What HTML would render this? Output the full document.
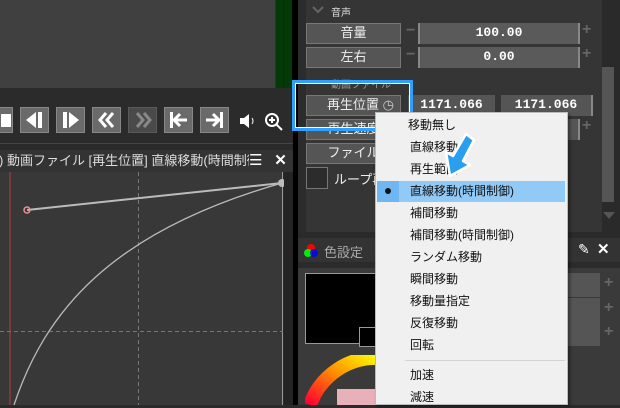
<!DOCTYPE html><html><head><meta charset="utf-8"><style>
*{margin:0;padding:0;box-sizing:border-box}
body{width:620px;height:405px;overflow:hidden;background:#2a2a2a;font-family:"Liberation Sans","Noto Sans CJK JP",sans-serif;position:relative}
.a{position:absolute}
.btn{position:absolute;background:#555;border:1px solid #777;color:#eee;font-size:13px;text-align:center;line-height:18px}
.fld{position:absolute;background:#5a5a5a;border-left:2px solid #888;border-right:2px solid #888;color:#fff;font-family:"Liberation Mono","DejaVu Sans Mono",monospace;font-size:13px;font-weight:bold;text-align:center;line-height:20px}
.tb{position:absolute;top:107px;width:29px;height:26px;background:#6a6a6a;border:1px solid #888}
.mi{position:absolute;left:410px;font-size:12px;color:#111;line-height:22px}
.pm{position:absolute;color:#666;font-size:16px;font-weight:bold}
</style></head><body>
<div class="a" style="left:0;top:0;width:275px;height:88px;background:#404040"></div>
<div class="a" style="left:275px;top:0;width:17px;height:88px;background:#033a08;border-left:1px solid #0a4a10"></div>
<div class="a" style="left:283px;top:0;width:1px;height:88px;background:#0c2a0c"></div>
<div class="a" style="left:292px;top:0;width:6px;height:90px;background:#000"></div>
<!-- toolbar -->
<div class="a" style="left:0;top:88px;width:293px;height:56px;background:#2b2b2b;border-bottom:1px solid #444"></div>
<div class="tb" style="left:-16px"><div class="a" style="left:16px;top:6px;width:10px;height:13px;background:#fff"></div></div>
<div class="tb" style="left:20px"><svg class="a" width="27" height="24"><polygon points="5,12 15,4 15,20" fill="#fff"/><rect x="17" y="4" width="4" height="16" fill="#fff"/></svg></div>
<div class="tb" style="left:56px"><svg class="a" width="27" height="24"><rect x="6" y="4" width="4" height="16" fill="#fff"/><polygon points="12,4 22,12 12,20" fill="#fff"/></svg></div>
<div class="tb" style="left:92px"><svg class="a" width="27" height="24"><path d="M13 5 L7 12 L13 19 M20 5 L14 12 L20 19" stroke="#fff" stroke-width="3" fill="none"/></svg></div>
<div class="tb" style="left:128px;background:#4a4a4a;border-color:#5a5a5a"><svg class="a" width="27" height="24"><path d="M8 5 L14 12 L8 19 M15 5 L21 12 L15 19" stroke="#888" stroke-width="3" fill="none"/></svg></div>
<div class="tb" style="left:164px"><svg class="a" width="27" height="24"><rect x="5" y="4" width="3" height="16" fill="#fff"/><path d="M9 12 H22 M15 6 L9 12 L15 18" stroke="#fff" stroke-width="3" fill="none"/></svg></div>
<div class="tb" style="left:200px"><svg class="a" width="27" height="24"><rect x="19" y="4" width="3" height="16" fill="#fff"/><path d="M5 12 H18 M12 6 L18 12 L12 18" stroke="#fff" stroke-width="3" fill="none"/></svg></div>
<svg class="a" style="left:238px;top:112px" width="20" height="18"><polygon points="2,6 6,6 11,2 11,16 6,12 2,12" fill="#fff"/><path d="M14 6 Q16 9 14 12" stroke="#fff" fill="none"/></svg>
<svg class="a" style="left:264px;top:112px" width="20" height="20"><circle cx="8" cy="8" r="6" stroke="#fff" stroke-width="2" fill="none"/><path d="M5 8H11M8 5V11M12 12L18 18" stroke="#fff" stroke-width="2"/></svg>
<!-- graph panel -->
<div class="a" style="left:0;top:150px;width:293px;height:22px;background:#333;color:#ddd;font-size:13px;line-height:22px;white-space:nowrap;overflow:hidden"><span style="margin-left:-1px">) 動画ファイル [再生位置] 直線移動(時間制御</span></div>
<div class="a" style="left:249px;top:152px;width:17px;height:18px;background:#333;color:#fff;font-size:15px;line-height:18px">☰</div>
<div class="a" style="left:268px;top:150px;width:25px;height:22px;background:#333;color:#fff;font-size:15px;font-weight:bold;line-height:22px;text-align:center">✕</div>
<div class="a" style="left:0;top:172px;width:283px;height:233px;background:#383838;border-right:1px solid #999"></div>
<div class="a" style="left:284px;top:172px;width:9px;height:233px;background:#242424"></div>
<div class="a" style="left:293px;top:90px;width:5px;height:315px;background:#000"></div>
<svg class="a" style="left:0;top:172px" width="284" height="233">
<line x1="10" y1="0" x2="10" y2="233" stroke="#b04040"/>
<line x1="138.5" y1="0" x2="138.5" y2="233" stroke="#777" stroke-dasharray="4,3"/>
<line x1="0" y1="159.5" x2="283" y2="159.5" stroke="#777" stroke-dasharray="4,3"/>
<path d="M14 233 C45 140 110 60 282 11" stroke="#bbb" stroke-width="1.3" fill="none"/>
<line x1="27" y1="38" x2="282" y2="11" stroke="#bbb" stroke-width="2"/>
<circle cx="282" cy="11" r="4" fill="#bbb"/>
<circle cx="27" cy="38" r="3" fill="none" stroke="#f09090" stroke-width="1.5"/>
</svg>
<!-- right panel -->
<div class="a" style="left:298px;top:0;width:322px;height:232px;background:#353535"></div>
<div class="a" style="left:298px;top:0;width:8px;height:232px;background:#2c2c2c"></div>
<div class="a" style="left:602px;top:0;width:18px;height:232px;background:#2a2a2a"></div>
<div class="a" style="left:602px;top:67px;width:12px;height:135px;background:#555"></div>
<svg class="a" style="left:602px;top:210px" width="14" height="10"><polygon points="1,2 13,2 7,9" fill="#555"/></svg>
<svg class="a" style="left:312px;top:6px" width="12" height="8"><path d="M1 1 L6 6 L11 1" stroke="#666" stroke-width="2" fill="none"/></svg>
<div class="a" style="left:331px;top:4px;font-size:10px;color:#ddd">音声</div>
<div class="btn" style="left:306px;top:23px;width:95px;height:21px">音量</div>
<div class="pm" style="left:406px;top:22px">−</div>
<div class="fld" style="left:418px;top:23px;width:162px;height:21px">100.00</div>
<div class="pm" style="left:582px;top:21px">+</div>
<div class="btn" style="left:306px;top:47px;width:95px;height:21px">左右</div>
<div class="pm" style="left:406px;top:46px">−</div>
<div class="fld" style="left:418px;top:47px;width:162px;height:21px">0.00</div>
<div class="pm" style="left:582px;top:45px">+</div>
<div class="a" style="left:331px;top:76px;font-size:10px;color:#999">動画ファイル</div>
<div class="btn" style="left:306px;top:95px;width:95px;height:21px;text-align:left;padding-left:20px">再生位置 <span style="font-size:13px;color:#ccc">◷</span></div>
<div class="fld" style="left:408px;top:95px;width:87px;height:21px;border:none;background:#555">1171.066</div>
<div class="fld" style="left:501px;top:95px;width:92px;height:21px;border-left:none;background:#555">1171.066</div>
<div class="btn" style="left:306px;top:119px;width:95px;height:21px">再生速度</div>
<div class="fld" style="left:560px;top:119px;width:20px;height:21px;background:#555"></div>
<div class="pm" style="left:582px;top:117px">+</div>
<div class="btn" style="left:306px;top:143px;width:95px;height:21px">ファイル</div>
<div class="a" style="left:306px;top:167px;width:22px;height:22px;background:#2c2c2c;border:1px solid #777"></div>
<div class="a" style="left:334px;top:169px;font-size:13px;color:#eee">ループ再生</div>
<!-- highlight box -->
<div class="a" style="left:292px;top:80px;width:121px;height:51px;border:3px solid #2ea0ff;box-shadow:inset 0 0 0 1px #fff"></div>
<!-- color panel -->
<div class="a" style="left:298px;top:238px;width:322px;height:167px;background:#3a3a3a"></div>
<div class="a" style="left:298px;top:238px;width:322px;height:24px;background:#333"></div>
<div class="a" style="left:298px;top:262px;width:322px;height:6px;background:#2b2b2b"></div>
<svg class="a" style="left:303px;top:243px" width="16" height="16"><circle cx="8" cy="5" r="4" fill="#f00"/><circle cx="5" cy="10" r="4" fill="#0f0" opacity=".9"/><circle cx="11" cy="10" r="4" fill="#00f" opacity=".8"/></svg>
<div class="a" style="left:324px;top:242px;font-size:13px;color:#aaa">色設定</div>
<div class="a" style="left:578px;top:241px;font-size:14px;color:#fff">✎</div>
<div class="a" style="left:597px;top:240px;font-size:15px;color:#fff;font-weight:bold">✕</div>
<div class="a" style="left:305px;top:273px;width:80px;height:71px;background:#000;border:1px solid #999"></div>
<div class="a" style="left:359px;top:327px;width:22px;height:20px;background:#000;border:1px solid #999"></div>
<div class="a" style="left:560px;top:273px;width:40px;height:24px;background:#555;color:#fff;font-family:'Liberation Mono',monospace;font-size:13px;font-weight:bold;line-height:24px">0</div>
<div class="a" style="left:560px;top:298px;width:40px;height:24px;background:#555;color:#fff;font-family:'Liberation Mono',monospace;font-size:13px;font-weight:bold;line-height:24px">0</div>
<div class="a" style="left:560px;top:322px;width:40px;height:24px;background:#555;color:#fff;font-family:'Liberation Mono',monospace;font-size:13px;font-weight:bold;line-height:24px">0</div>
<div class="pm" style="left:604px;top:274px">+</div><div class="pm" style="left:604px;top:299px">+</div><div class="pm" style="left:604px;top:323px">+</div>
<svg class="a" style="left:305px;top:355px" width="80" height="50"><defs><linearGradient id="g" x1="0" y1="1" x2="1" y2="0"><stop offset="0" stop-color="#f03"/><stop offset=".5" stop-color="#f80"/><stop offset="1" stop-color="#ff0"/></linearGradient></defs><path d="M5 50 A70 70 0 0 1 75 3" stroke="url(#g)" stroke-width="14" fill="none"/><rect x="32" y="34" width="38" height="16" fill="#e8b0b8"/></svg>
<!-- menu -->
<div class="a" style="left:375px;top:112px;width:193px;height:293px;background:#f0f0f0;border:1px solid #bbb;box-shadow:2px 2px 3px rgba(0,0,0,.4)"></div>
<div class="a" style="left:377px;top:181px;width:188px;height:21px;background:#91c9f7"></div>
<div class="a" style="left:377px;top:181px;width:22px;height:21px;background:#6fb6f2"></div>
<div class="a" style="left:385px;top:188px;width:6px;height:6px;border-radius:3px;background:#111"></div>
<div class="mi" style="top:114px;left:408px">移動無し</div>
<div class="mi" style="top:136px">直線移動</div>
<div class="mi" style="top:158px">再生範囲</div>
<div class="mi" style="top:180px">直線移動(時間制御)</div>
<div class="mi" style="top:202px">補間移動</div>
<div class="mi" style="top:224px">補間移動(時間制御)</div>
<div class="mi" style="top:246px">ランダム移動</div>
<div class="mi" style="top:268px">瞬間移動</div>
<div class="mi" style="top:290px">移動量指定</div>
<div class="mi" style="top:312px">反復移動</div>
<div class="mi" style="top:334px">回転</div>
<div class="a" style="left:405px;top:360px;width:160px;height:1px;background:#d4d4d4"></div>
<div class="mi" style="top:364px">加速</div>
<div class="mi" style="top:386px">減速</div>
<svg class="a" style="left:436px;top:130px" width="40" height="52"><path d="M30 4 L17 26 L10 22 L14 46 L34 35 L27 31 L38 10 Z" fill="#2a9ff0" stroke="#fff" stroke-width="2.5" stroke-linejoin="round"/></svg>
</body></html>
